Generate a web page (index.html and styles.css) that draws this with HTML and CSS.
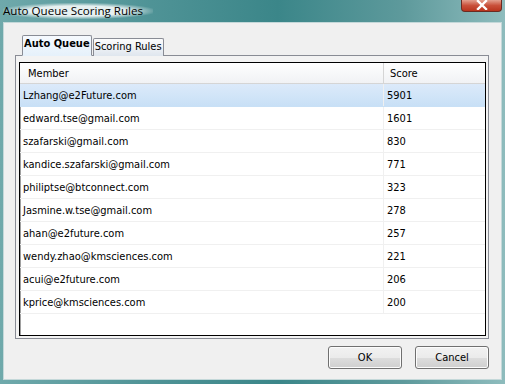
FILE: index.html
```html
<!DOCTYPE html>
<html lang="en">
  <head>
    <meta charset="UTF-8" />
    <title>Auto Queue Scoring Rules</title>
    <link rel="stylesheet" href="styles.css">
  </head>
  <body>
    <div class="window">
      <div class="titlebar">
        <span class="title">Auto Queue Scoring Rules</span>
        <div class="closeBtn">
          <svg width="14" height="10" viewBox="0 0 14 10">
            <path d="M3 1 L11 9 M11 1 L3 9" stroke="#fff" stroke-width="2.4" stroke-linecap="square" />
          </svg>
        </div>
      </div>

      <div class="client">
        <div class="tabs">
          <div class="tab active">Auto Queue</div>
          <div class="tab">Scoring Rules</div>
        </div>

        <div class="panel">
          <div class="list">
            <div class="row header">
              <div class="cell member">Member</div>
              <div class="cell score">Score</div>
            </div>
            <div class="row selected">
              <div class="cell member">Lzhang@e2Future.com</div>
              <div class="cell score">5901</div>
            </div>
            <div class="row">
              <div class="cell member">edward.tse@gmail.com</div>
              <div class="cell score">1601</div>
            </div>
            <div class="row">
              <div class="cell member">szafarski@gmail.com</div>
              <div class="cell score">830</div>
            </div>
            <div class="row">
              <div class="cell member">kandice.szafarski@gmail.com</div>
              <div class="cell score">771</div>
            </div>
            <div class="row">
              <div class="cell member">philiptse@btconnect.com</div>
              <div class="cell score">323</div>
            </div>
            <div class="row">
              <div class="cell member">Jasmine.w.tse@gmail.com</div>
              <div class="cell score">278</div>
            </div>
            <div class="row">
              <div class="cell member">ahan@e2future.com</div>
              <div class="cell score">257</div>
            </div>
            <div class="row">
              <div class="cell member">wendy.zhao@kmsciences.com</div>
              <div class="cell score">221</div>
            </div>
            <div class="row">
              <div class="cell member">acui@e2future.com</div>
              <div class="cell score">206</div>
            </div>
            <div class="row">
              <div class="cell member">kprice@kmsciences.com</div>
              <div class="cell score">200</div>
            </div>
          </div>
        </div>

        <div class="buttons">
          <button class="btn ok">OK</button>
          <button class="btn cancel">Cancel</button>
        </div>
      </div>
    </div>
  </body>
</html>
```

FILE: styles.css
```css
html,
body {
  margin: 0;
  padding: 0;
}

body {
  width: 505px;
  height: 384px;
  overflow: hidden;
  font-family: "DejaVu Sans Condensed", "DejaVu Sans", sans-serif;
  font-size: 11px;
  color: #000;
}

.window {
  width: 505px;
  height: 384px;
  display: flex;
  flex-direction: column;
  background: linear-gradient(90deg, #6fa9ab 0%, #4f9396 30%, #3b8689 55%, #5e9a9c 80%, #8ebcbd 100%);
  box-sizing: border-box;
}

.titlebar {
  height: 22px;
  display: flex;
  align-items: flex-start;
  justify-content: space-between;
  flex-shrink: 0;
}

.title {
  margin: 3px 0 0 3px;
  padding: 0 10px 0 0;
  font-family: "Open Sans", sans-serif;
  font-size: 11.6px;
  line-height: 16px;
  color: #000;
  background: radial-gradient(ellipse at center, rgba(255, 255, 255, 0.85) 45%, rgba(255, 255, 255, 0) 75%);
}

.closeBtn {
  width: 41px;
  height: 12px;
  margin-right: 3px;
  display: flex;
  align-items: flex-end;
  justify-content: center;
  background: linear-gradient(#e3a08e, #c9503a 50%, #b8341d 100%);
  border: 1px solid #6b2b22;
  border-top: none;
  border-radius: 0 0 4px 4px;
  box-sizing: border-box;
}

.closeBtn svg {
  margin-bottom: 1px;
}

.client {
  flex: 1;
  margin: 0 3px 4px 3px;
  background: #f0f0f0;
  border: 1px solid #c4d8d9;
  padding: 14px 12px 0 11px;
  display: flex;
  flex-direction: column;
}

.tabs {
  display: flex;
  align-items: flex-end;
  padding-left: 7px;
  height: 19px;
  position: relative;
  z-index: 1;
  margin-bottom: -1px;
}

.tab {
  height: 17px;
  line-height: 16px;
  padding: 0 1px;
  border: 1px solid #898c95;
  border-bottom: none;
  border-radius: 2px 2px 0 0;
  background: linear-gradient(#fcfcfc, #eef1f5 50%, #dfe6ee 100%);
}

.tab.active {
  height: 19px;
  font-weight: bold;
  padding: 0 1px;
  background: linear-gradient(#f6fafe, #e6f1fb);
  border-bottom: 1px solid #e6f1fb;
}

.tab + .tab {
  margin-left: 1px;
}

.panel {
  height: 284px;
  border: 1px solid #898c95;
  background: #f3f3f3;
  padding: 6px 3px 0 3px;
  box-sizing: border-box;
}

.list {
  width: 467px;
  height: 274px;
  border: 1px solid #000;
  box-sizing: border-box;
  background: #fff;
  box-shadow: inset 1px 1px 0 #a0a0a0;
}

.row {
  display: flex;
  height: 23px;
  border-bottom: 1px solid #f0f0f0;
  box-sizing: border-box;
  align-items: center;
}

.row.header {
  height: 21px;
  background: linear-gradient(#ffffff, #f7f8f9 50%, #f1f2f4);
  border-bottom: 1px solid #d5d5d5;
}

.row.selected {
  background: linear-gradient(#dceafa, #c8e0f6);
  border-bottom-color: #c8e0f6;
}

.cell {
  height: 100%;
  display: flex;
  align-items: center;
  box-sizing: border-box;
}

.cell.member {
  width: 364px;
  padding-left: 3px;
  border-right: 1px solid #f0f0f0;
}

.cell.score {
  padding-left: 3px;
}

.header .cell.member {
  padding-left: 8px;
  border-right-color: #d5d5d5;
}

.header .cell.score {
  padding-left: 6px;
}

.buttons {
  display: flex;
  justify-content: flex-end;
  gap: 13px;
  margin-top: 7px;
}

.btn {
  width: 74px;
  height: 23px;
  font-family: "DejaVu Sans Condensed", "DejaVu Sans", sans-serif;
  font-size: 11px;
  color: #000;
  border: 1px solid #707070;
  border-radius: 3px;
  background: linear-gradient(#f2f2f2, #ebebeb 50%, #dddddd 51%, #cfcfcf);
  box-shadow: inset 0 0 0 1px #fcfcfc;
  padding: 0;
}
```
